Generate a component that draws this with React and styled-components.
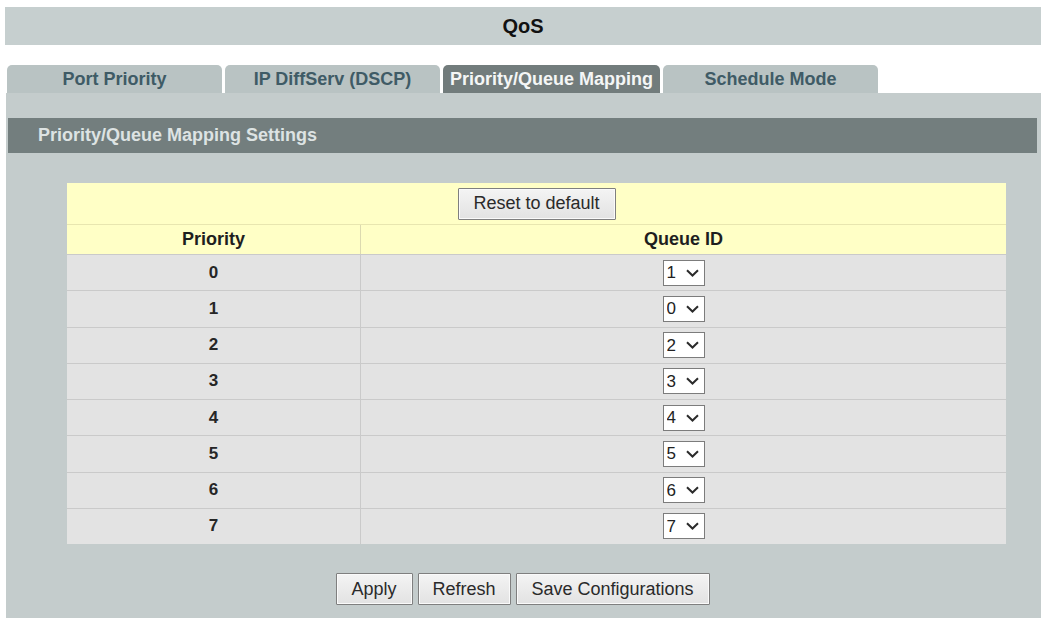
import React, { useState } from 'react';
import styled, { createGlobalStyle } from 'styled-components';

const GlobalStyle = createGlobalStyle`
  body {
    margin: 0;
    background: #ffffff;
    font-family: "Liberation Sans", Arial, sans-serif;
  }
`;

const tabs = ['Port Priority', 'IP DiffServ (DSCP)', 'Priority/Queue Mapping', 'Schedule Mode'];
const tabWidths = [215, 215, 217, 215];

const Chevron = () => (
  <svg width="13" height="8" viewBox="0 0 13 8">
    <path d="M1 1.2 L6.5 6.5 L12 1.2" fill="none" stroke="#2b2b2b" strokeWidth="2" />
  </svg>
);

const QueueSelect = ({ value, onChange }) => (
  <SelectWrap>
    <Select value={value} onChange={(e) => onChange(Number(e.target.value))}>
      {[0, 1, 2, 3, 4, 5, 6, 7].map((q) => (
        <option key={q} value={q}>{q}</option>
      ))}
    </Select>
    <ChevronBox><Chevron /></ChevronBox>
  </SelectWrap>
);

const defaults = [1, 0, 2, 3, 4, 5, 6, 7];

const App = () => {
  const [active, setActive] = useState(2);
  const [queues, setQueues] = useState(defaults);

  const setQueue = (i, q) => {
    const next = [...queues];
    next[i] = q;
    setQueues(next);
  };

  return (
    <Page>
      <GlobalStyle />
      <TitleBar>QoS</TitleBar>
      <TabRow>
        {tabs.map((t, i) => (
          <Tab key={t} $active={i === active} $width={tabWidths[i]} onClick={() => setActive(i)}>
            {t}
          </Tab>
        ))}
      </TabRow>
      <Panel>
        <SectionHeader>Priority/Queue Mapping Settings</SectionHeader>
        <Table>
          <ResetRow>
            <Button $width={158} onClick={() => setQueues(defaults)}>Reset to default</Button>
          </ResetRow>
          <HeadRow>
            <HeadCell>Priority</HeadCell>
            <HeadCell $divider>Queue ID</HeadCell>
          </HeadRow>
          {queues.map((q, i) => (
            <Row key={i}>
              <Cell>{i}</Cell>
              <Cell $divider>
                <QueueSelect value={q} onChange={(v) => setQueue(i, v)} />
              </Cell>
            </Row>
          ))}
        </Table>
        <Actions>
          <Button $width={77}>Apply</Button>
          <Button $width={93}>Refresh</Button>
          <Button $width={194}>Save Configurations</Button>
        </Actions>
      </Panel>
    </Page>
  );
};

export default App;

const Page = styled.div`
  padding: 7px 2px 0 5px;
  width: 1036px;
`;

const TitleBar = styled.div`
  height: 38px;
  background: #c6cfcf;
  display: flex;
  align-items: center;
  justify-content: center;
  font-size: 20px;
  font-weight: bold;
  color: #111;
`;

const TabRow = styled.div`
  display: flex;
  gap: 3px;
  margin-top: 20px;
  padding-left: 2px;
  height: 28px;
`;

const Tab = styled.div`
  width: ${(p) => p.$width}px;
  height: 28px;
  border-radius: 5px 5px 0 0;
  background: ${(p) => (p.$active ? '#727c7c' : '#b9c3c3')};
  color: ${(p) => (p.$active ? '#f4f6f6' : '#3f5b66')};
  font-size: 18px;
  font-weight: bold;
  display: flex;
  align-items: center;
  justify-content: center;
  cursor: pointer;
`;

const Panel = styled.div`
  background: #c4cccc;
  margin-left: 1px;
  padding: 25px 4px 15px 2px;
  display: flex;
  flex-direction: column;
`;

const SectionHeader = styled.div`
  height: 35px;
  background: #737e7e;
  color: #dde3e3;
  font-size: 18px;
  font-weight: bold;
  display: flex;
  align-items: center;
  padding-left: 30px;
`;

const Table = styled.div`
  margin: 30px 0 0 59px;
  width: 939px;
  display: flex;
  flex-direction: column;
`;

const ResetRow = styled.div`
  height: 41px;
  background: #ffffc6;
  display: flex;
  align-items: center;
  justify-content: center;
  border-bottom: 1px solid #e8e6b0;
`;

const HeadRow = styled.div`
  height: 29px;
  background: #ffffc6;
  display: grid;
  grid-template-columns: 293px 1fr;
`;

const HeadCell = styled.div`
  display: flex;
  align-items: center;
  justify-content: center;
  font-size: 18px;
  font-weight: bold;
  color: #1e1e1e;
  border-left: ${(p) => (p.$divider ? '1px solid #dcdab0' : 'none')};
`;

const Row = styled.div`
  height: 36.25px;
  box-sizing: border-box;
  background: #e3e3e3;
  border-top: 1px solid #cacaca;
  display: grid;
  grid-template-columns: 293px 1fr;
`;

const Cell = styled.div`
  display: flex;
  align-items: center;
  justify-content: center;
  font-size: 17px;
  font-weight: bold;
  color: #262626;
  border-left: ${(p) => (p.$divider ? '1px solid #cacaca' : 'none')};
`;

const SelectWrap = styled.div`
  position: relative;
  width: 42px;
  height: 26px;
`;

const Select = styled.select`
  appearance: none;
  width: 42px;
  height: 26px;
  box-sizing: border-box;
  border: 1px solid #7c7c7c;
  background: #ffffff;
  font-family: "Liberation Sans", Arial, sans-serif;
  font-size: 17px;
  color: #222;
  padding: 0 0 0 3px;
  margin: 0;
  border-radius: 0;
  outline: none;
`;

const ChevronBox = styled.span`
  position: absolute;
  right: 6px;
  top: 9px;
  display: flex;
  pointer-events: none;
`;

const Actions = styled.div`
  display: flex;
  justify-content: center;
  gap: 5px;
  margin-top: 29px;
`;

const Button = styled.button`
  width: ${(p) => p.$width}px;
  height: 32px;
  border: 1px solid #7f7f7f;
  border-radius: 1px;
  background: linear-gradient(#f4f4f4, #e2e2e2);
  box-shadow: inset 0 0 0 1px #fafafa;
  font-family: "Liberation Sans", Arial, sans-serif;
  font-size: 18px;
  color: #2a2a2a;
  padding: 0;
  cursor: pointer;
`;
